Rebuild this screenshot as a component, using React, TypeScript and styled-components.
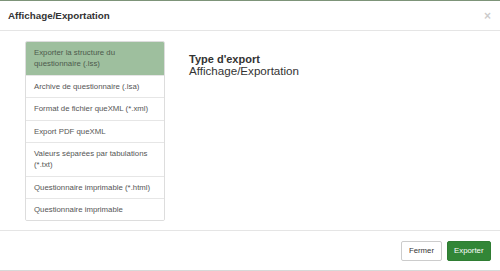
import React, { useState } from 'react'
import styled, { createGlobalStyle } from 'styled-components'

const GlobalStyle = createGlobalStyle`
  html, body {
    margin: 0;
    padding: 0;
    background: #fff;
  }
  body {
    font-family: "Liberation Sans", Arial, Helvetica, sans-serif;
    color: #333;
  }
`

const exportTypes = [
  'Exporter la structure du questionnaire (.lss)',
  'Archive de questionnaire (.lsa)',
  'Format de fichier queXML (*.xml)',
  'Export PDF queXML',
  'Valeurs séparées par tabulations (*.txt)',
  'Questionnaire imprimable (*.html)',
  'Questionnaire imprimable',
]

const App: React.FC = () => {
  const [selected, setSelected] = useState(0)

  return (
    <>
      <GlobalStyle />
      <StyledModal>
        <StyledHeader>
          <StyledTitle>Affichage/Exportation</StyledTitle>
          <StyledClose aria-label="Fermer">×</StyledClose>
        </StyledHeader>
        <StyledBody>
          <StyledList>
            {exportTypes.map((label, i) => (
              <StyledItem
                key={i}
                $active={i === selected}
                onClick={() => setSelected(i)}
              >
                {label}
              </StyledItem>
            ))}
          </StyledList>
          <StyledPanel>
            <StyledPanelTitle>Type d'export</StyledPanelTitle>
            <StyledPanelSub>Affichage/Exportation</StyledPanelSub>
          </StyledPanel>
        </StyledBody>
        <StyledFooter>
          <StyledButton>Fermer</StyledButton>
          <StyledButton $primary>Exporter</StyledButton>
        </StyledFooter>
      </StyledModal>
    </>
  )
}

const StyledModal = styled.div`
  width: 500px;
  height: 271px;
  box-sizing: border-box;
  display: flex;
  flex-direction: column;
  background: #fff;
  border-top: 1px solid #7d9479;
  border-bottom: 1px solid #d8d8d8;
`

const StyledHeader = styled.div`
  height: 30px;
  box-sizing: border-box;
  display: flex;
  align-items: center;
  justify-content: space-between;
  padding: 0 9px 0 8px;
  border-bottom: 1px solid #e5e5e5;
`

const StyledTitle = styled.h4`
  margin: 0;
  font-size: 9.8px;
  font-weight: 700;
  color: #333;
  line-height: 12px;
`

const StyledClose = styled.button`
  border: 0;
  background: none;
  padding: 0;
  font-family: "Liberation Sans", Arial, sans-serif;
  font-size: 12px;
  font-weight: 700;
  line-height: 12px;
  color: #000;
  opacity: 0.2;
  cursor: pointer;
`

const StyledBody = styled.div`
  flex: 1;
  display: flex;
  align-items: flex-start;
  padding: 10px 0 0 25px;
`

const StyledList = styled.div`
  width: 138px;
  display: flex;
  flex-direction: column;
  border: 1px solid #ddd;
  border-radius: 2px;
  overflow: hidden;
`

const StyledItem = styled.div<{ $active?: boolean }>`
  padding: 5.2px 8px;
  font-size: 7.8px;
  line-height: 11.1px;
  color: ${(p) => (p.$active ? '#4d5a4d' : '#555')};
  background: ${(p) => (p.$active ? '#9ebf9e' : '#fff')};
  border-top: 1px solid ${(p) => (p.$active ? '#9ebf9e' : '#e6e6e6')};
  cursor: pointer;
  &:first-child {
    border-top: 0;
  }
`

const StyledPanel = styled.div`
  margin-left: 24px;
  padding-top: 12px;
`

const StyledPanelTitle = styled.div`
  font-size: 11px;
  font-weight: 700;
  line-height: 12px;
  color: #333;
`

const StyledPanelSub = styled.div`
  font-size: 11.6px;
  line-height: 12px;
  color: #333;
`

const StyledFooter = styled.div`
  height: 40px;
  box-sizing: border-box;
  display: flex;
  align-items: center;
  justify-content: flex-end;
  gap: 5px;
  padding: 0 9px 0 0;
  border-top: 1px solid #e5e5e5;
`

const StyledButton = styled.button<{ $primary?: boolean }>`
  height: 20px;
  box-sizing: border-box;
  padding: 0 6.5px;
  font-family: "Liberation Sans", Arial, sans-serif;
  font-size: 7.8px;
  border-radius: 2px;
  border: 1px solid ${(p) => (p.$primary ? '#2f7d33' : '#ccc')};
  background: ${(p) => (p.$primary ? '#328637' : '#fff')};
  color: ${(p) => (p.$primary ? '#fff' : '#333')};
  cursor: pointer;
`

export default App
